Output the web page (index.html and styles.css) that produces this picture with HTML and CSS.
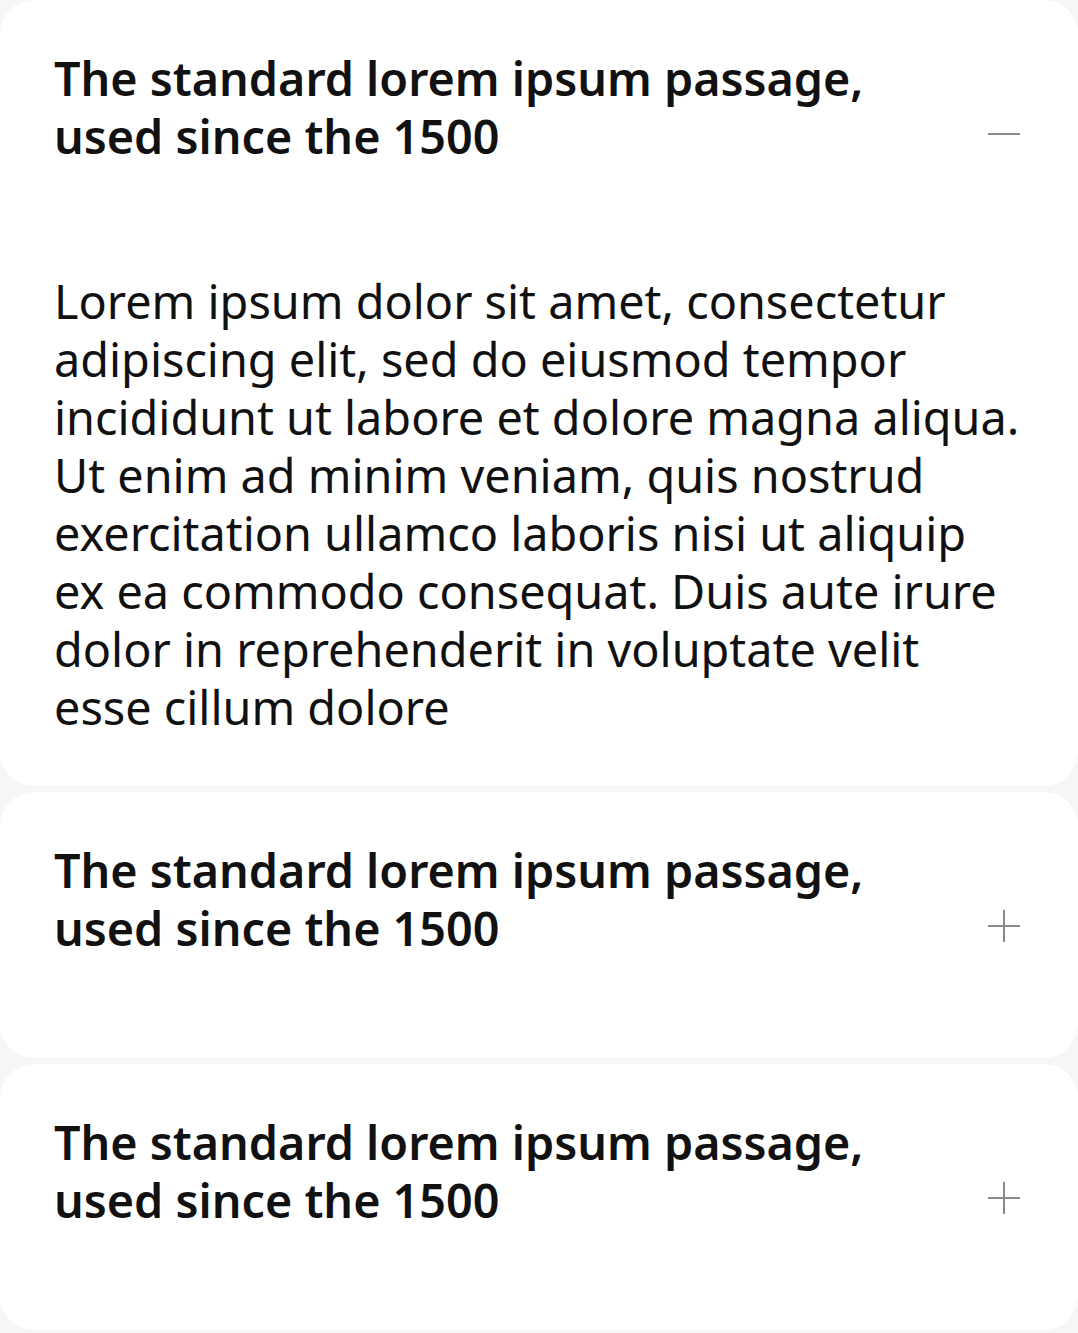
FILE: index.html
```html
<!DOCTYPE html>
<html>
<head>
<meta charset="utf-8">
<link rel="stylesheet" href="styles.css">
</head>
<body>
<div class="list">
  <section class="card open">
    <div class="head">
      <h2 class="title">The standard lorem ipsum passage,<br>used since the 1500</h2>
      <svg class="icon" viewBox="0 0 32 32"><path d="M0 16H32" /></svg>
    </div>
    <p class="body">Lorem ipsum dolor sit amet, consectetur adipiscing elit, sed do eiusmod tempor incididunt ut labore et dolore magna aliqua. Ut enim ad minim veniam, quis nostrud exercitation ullamco laboris nisi ut aliquip ex ea commodo consequat. Duis aute irure dolor in reprehenderit in voluptate velit esse cillum dolore</p>
  </section>
  <section class="card">
    <div class="head">
      <h2 class="title">The standard lorem ipsum passage,<br>used since the 1500</h2>
      <svg class="icon" viewBox="0 0 32 32"><path d="M0 16H32M16 0V32" /></svg>
    </div>
  </section>
  <section class="card">
    <div class="head">
      <h2 class="title">The standard lorem ipsum passage,<br>used since the 1500</h2>
      <svg class="icon" viewBox="0 0 32 32"><path d="M0 16H32M16 0V32" /></svg>
    </div>
  </section>
</div>
</body>
</html>
```
FILE: styles.css
```css
html, body {
  margin: 0;
  padding: 0;
  background: #f6f6f6;
}
body {
  font-family: "Noto Sans", "Open Sans", sans-serif;
  color: #111;
}
.list {
  display: flex;
  flex-direction: column;
  gap: 6px;
}
.card {
  background: #fff;
  border-radius: 34px;
  padding: 49px 54px 101px 54px;
}
.card.open {
  padding-bottom: 50px;
}
.head {
  display: flex;
  justify-content: space-between;
}
.title {
  margin: 0;
  font-size: 46.7px;
  line-height: 58px;
  font-weight: 600;
}
.icon {
  width: 32px;
  height: 32px;
  align-self: flex-end;
  margin-bottom: 15px;
  margin-right: 4px;
  fill: none;
  stroke: #8a8a8a;
  stroke-width: 2;
}
.body {
  margin: 107px 0 0 0;
  font-size: 46.8px;
  line-height: 58px;
  font-weight: 400;
}
```
